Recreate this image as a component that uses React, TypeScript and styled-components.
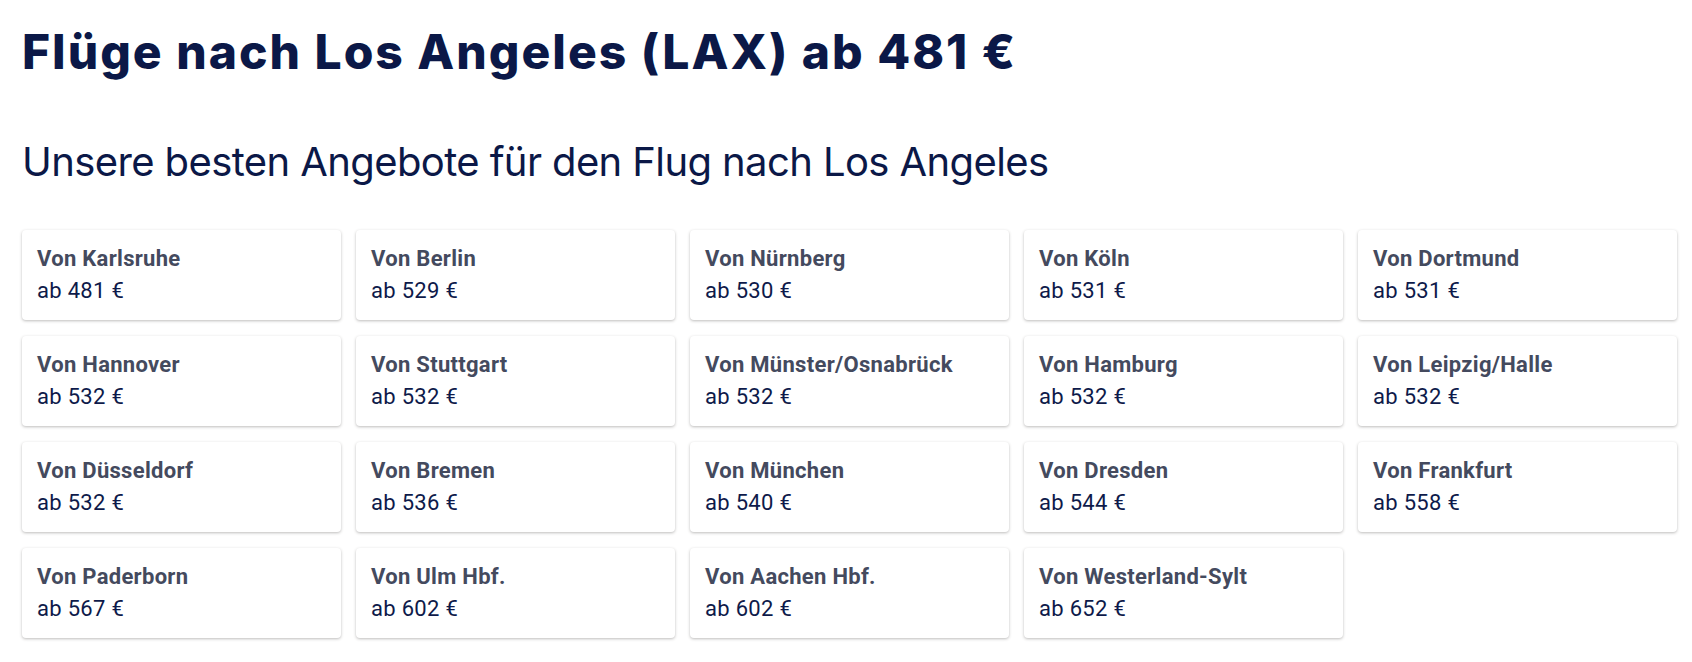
import React from "react";
import styled, { createGlobalStyle } from "styled-components";

const GlobalStyle = createGlobalStyle`
  html, body {
    margin: 0;
    padding: 0;
    background: #ffffff;
  }
  body {
    font-family: Inter, "Noto Sans", sans-serif;
    -webkit-font-smoothing: antialiased;
  }
`;

const Page = styled.main`
  padding: 23px 15px 20px 22px;
`;

const Title = styled.h1`
  margin: 0;
  font-family: Inter, "Noto Sans", sans-serif;
  font-size: 48px;
  line-height: 57.6px;
  font-weight: 800;
  letter-spacing: 2px;
  color: #0b1847;
`;

const Subtitle = styled.h2`
  margin: 57px 0 0;
  font-family: Inter, "Noto Sans", sans-serif;
  font-size: 40px;
  line-height: 48px;
  font-weight: 400;
  letter-spacing: -0.6px;
  color: #0b1847;
`;

const Grid = styled.ul`
  list-style: none;
  margin: 44px 0 0;
  padding: 0;
  display: grid;
  grid-template-columns: repeat(5, 319px);
  column-gap: 15px;
  row-gap: 16px;
`;

const Card = styled.li`
  box-sizing: border-box;
  height: 90px;
  padding: 13px 15px 12px;
  background: #ffffff;
  border-radius: 4px;
  box-shadow: 0 1px 3px 0 rgba(37, 32, 31, 0.3);
  font-family: Roboto, "Liberation Sans", sans-serif;
  font-size: 22px;
  line-height: 32px;
  letter-spacing: 0.3px;
`;

const City = styled.div`
  font-weight: 700;
  color: #444a5e;
`;

const Price = styled.div`
  font-weight: 400;
  color: #0e1a4a;
`;

const offers: [string, number][] = [
  ["Karlsruhe", 481],
  ["Berlin", 529],
  ["Nürnberg", 530],
  ["Köln", 531],
  ["Dortmund", 531],
  ["Hannover", 532],
  ["Stuttgart", 532],
  ["Münster/Osnabrück", 532],
  ["Hamburg", 532],
  ["Leipzig/Halle", 532],
  ["Düsseldorf", 532],
  ["Bremen", 536],
  ["München", 540],
  ["Dresden", 544],
  ["Frankfurt", 558],
  ["Paderborn", 567],
  ["Ulm Hbf.", 602],
  ["Aachen Hbf.", 602],
  ["Westerland-Sylt", 652],
];

export default function App() {
  return (
    <>
      <GlobalStyle />
      <Page>
        <Title>Flüge nach Los Angeles (LAX) ab 481 €</Title>
        <Subtitle>Unsere besten Angebote für den Flug nach Los Angeles</Subtitle>
        <Grid>
          {offers.map(([city, price]) => (
            <Card key={city}>
              <City>Von {city}</City>
              <Price>ab {price} €</Price>
            </Card>
          ))}
        </Grid>
      </Page>
    </>
  );
}
